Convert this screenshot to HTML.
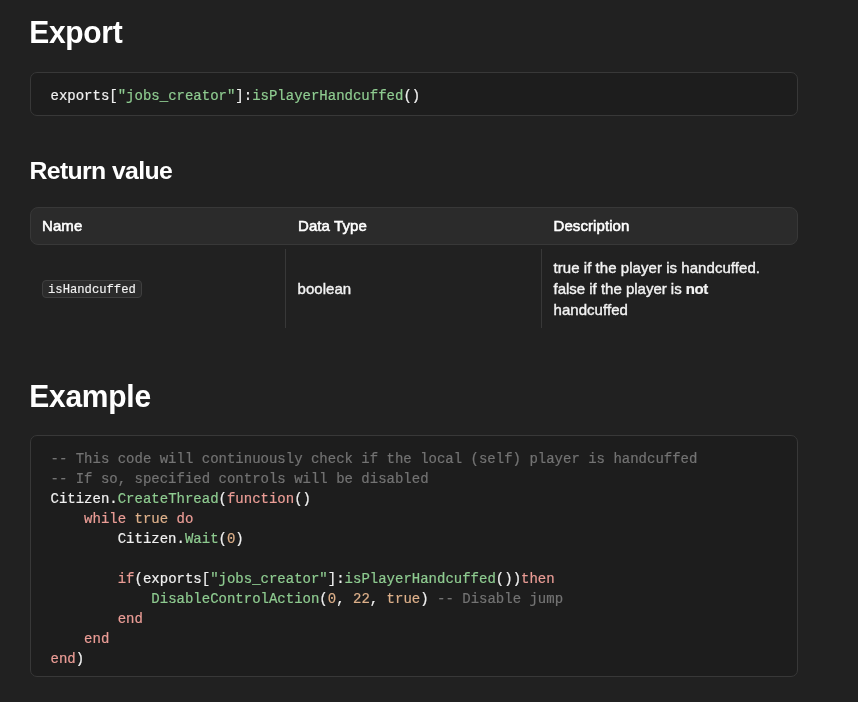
<!DOCTYPE html>
<html lang="en">
<head>
<meta charset="utf-8">
<title>isPlayerHandcuffed</title>
<style>
html,body{margin:0;padding:0;}
body{background:#212121;color:#fff;font-family:"Liberation Sans",sans-serif;width:858px;height:702px;overflow:hidden;position:relative;}
.wrap{position:absolute;left:30px;top:0;width:768px;height:702px;will-change:transform;}
h1{margin:0;font-size:30px;font-weight:700;line-height:36px;letter-spacing:-0.68px;position:absolute;left:-0.8px;transform:scaleY(1.05);transform-origin:0 28px;}
h2{margin:0;font-size:24.8px;font-weight:700;line-height:30px;letter-spacing:-0.63px;position:absolute;left:-0.5px;}
pre{margin:0;position:absolute;left:0;width:766px;box-sizing:content-box;border:1px solid #383838;border-radius:7px;background:#1d1d1d;font-family:"Liberation Mono",monospace;font-size:14px;line-height:20px;padding:13px 0 9px 19.5px;width:746.5px;color:#f0f0f0;white-space:pre;}
pre{-webkit-text-stroke:0.2px}.g{color:#8ecb90}.c{color:#737373}.k{color:#eb9d96}.n{color:#ddb08a}.s{color:#8ecb90}
.thead{position:absolute;left:0;top:207px;width:766px;height:36px;border:1px solid #383838;border-radius:8px;background:#2b2b2b;}
.thead div{position:absolute;top:0;line-height:36px;font-size:15px;font-weight:400;letter-spacing:0.08px;-webkit-text-stroke:0.55px #fff;}
.row{position:absolute;left:0;top:249px;width:768px;height:79px;}
.cell{position:absolute;top:0;height:79px;width:256px;font-size:15px;line-height:21px;}
.cell.b{border-left:1px solid #383838;width:255px;}
.cell .t{position:absolute;left:11.5px;letter-spacing:0.05px;color:#f3f3f3;-webkit-text-stroke:0.38px #f3f3f3;}.cell b{letter-spacing:-0.45px;-webkit-text-stroke:0.2px #f3f3f3}
code.i{font-family:"Liberation Mono",monospace;font-size:12.2px;border:1px solid #3f3f3f;border-radius:4px;background:#2b2b2b;padding:0 5px;height:15.5px;line-height:19.4px;display:block;position:absolute;left:12px;top:31px;color:#f2f2f2;-webkit-text-stroke:0.15px #f2f2f2;}
</style>
</head>
<body>
<div class="wrap">
<h1 style="top:14.85px;letter-spacing:-0.3px">Export</h1>
<pre style="top:72px">exports[<span class="s">"jobs_creator"</span>]:<span class="g">isPlayerHandcuffed</span>()</pre>
<h2 style="top:156px">Return value</h2>
<div class="thead"><div style="left:11px">Name</div><div style="left:267px">Data Type</div><div style="left:522.5px">Description</div></div>
<div class="row">
<div class="cell" style="left:0"><code class="i">isHandcuffed</code></div>
<div class="cell b" style="left:255px"><div class="t" style="top:29px">boolean</div></div>
<div class="cell b" style="left:511px"><div class="t" style="top:8px;width:235px">true if the player is handcuffed.<br><span style="letter-spacing:-0.01px">false if the player is </span><b>not</b><br>handcuffed</div></div>
</div>
<h1 style="top:378.95px;letter-spacing:-0.25px">Example</h1>
<pre style="top:435px;padding-bottom:7px"><span class="c">-- This code will continuously check if the local (self) player is handcuffed</span>
<span class="c">-- If so, specified controls will be disabled</span>
Citizen.<span class="g">CreateThread</span>(<span class="k">function</span>()
    <span class="k">while</span> <span class="n">true</span> <span class="k">do</span>
        Citizen.<span class="g">Wait</span>(<span class="n">0</span>)

        <span class="k">if</span>(exports[<span class="s">"jobs_creator"</span>]:<span class="g">isPlayerHandcuffed</span>())<span class="k">then</span>
            <span class="g">DisableControlAction</span>(<span class="n">0</span>, <span class="n">22</span>, <span class="n">true</span>) <span class="c">-- Disable jump</span>
        <span class="k">end</span>
    <span class="k">end</span>
<span class="k">end</span>)</pre>
</div>
</body>
</html>
